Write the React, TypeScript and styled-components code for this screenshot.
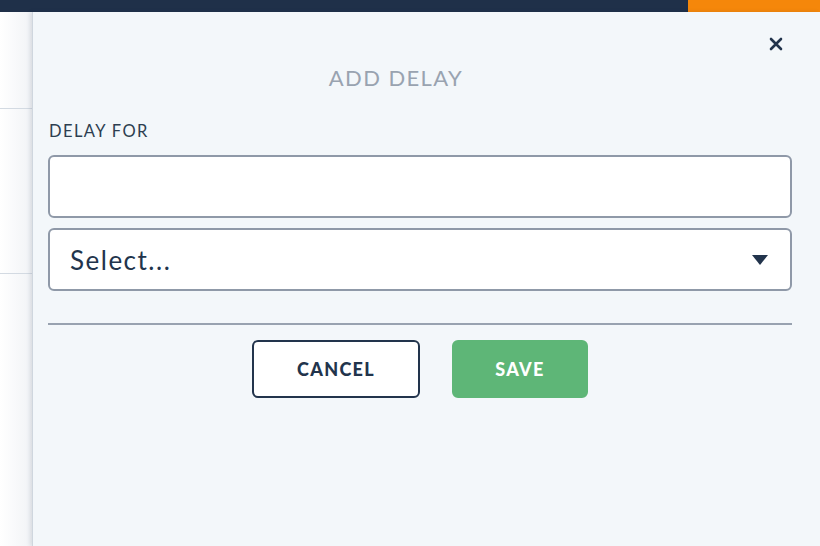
import React from "react";
import styled, { createGlobalStyle } from "styled-components";

const Global = createGlobalStyle`
  html, body { margin: 0; padding: 0; }
  body { width: 820px; height: 546px; overflow: hidden; background: #ffffff; font-family: Lato, "Open Sans", sans-serif; }
`;

const Page = styled.div`
  width: 820px;
  height: 546px;
  display: flex;
  flex-direction: column;
`;

const TopBar = styled.div`
  height: 12px;
  display: flex;
  background: #1f3049;
  flex-shrink: 0;
`;

const TopFill = styled.div`
  flex: 1;
`;

const TopAccent = styled.div`
  width: 132px;
  background: #f5870a;
`;

const Body = styled.div`
  flex: 1;
  display: flex;
`;

const Behind = styled.div`
  width: 32px;
  background: linear-gradient(to right, #ffffff, #f1f3f6);
  display: flex;
  flex-direction: column;
`;

const BehindRow = styled.div<{ $h: number }>`
  height: ${(p) => p.$h}px;
  border-bottom: 1px solid #d3dae2;
  flex-shrink: 0;
`;

const Panel = styled.div`
  flex: 1;
  background: #f3f7fa;
  border-left: 1px solid #cfd6de;
  box-shadow: -2px 0 4px rgba(30, 48, 73, 0.12);
  padding: 0 28px 0 15px;
  display: flex;
  flex-direction: column;
`;

const Header = styled.div`
  height: 96px;
  display: flex;
  align-items: center;
  justify-content: center;
  position: relative;
`;

const Title = styled.h2`
  margin: 0;
  padding-top: 34px;
  font-family: Lato, sans-serif;
  font-weight: 400;
  font-size: 22px;
  letter-spacing: 1.4px;
  color: #99a3b0;
  transform: translateX(-24px);
`;

const Close = styled.button`
  position: absolute;
  right: 5px;
  top: 21px;
  width: 22px;
  height: 22px;
  padding: 0;
  border: none;
  background: none;
  display: flex;
  align-items: center;
  justify-content: center;
`;

const Label = styled.div`
  font-family: Lato, sans-serif;
  font-size: 16.5px;
  letter-spacing: 1.4px;
  color: #2d3e50;
  margin-top: 13px;
  margin-bottom: 14px;
  padding-left: 1px;
`;

const Field = styled.div`
  height: 63px;
  box-sizing: border-box;
  border: 2px solid #8f99a8;
  border-radius: 6px;
  background: #ffffff;
  display: flex;
  align-items: center;
  padding: 0 20px;
  margin-bottom: 10px;
`;

const SelectText = styled.span`
  flex: 1;
  font-family: Lato, sans-serif;
  font-size: 26px;
  color: #22344c;
  letter-spacing: 1.5px;
`;

const Divider = styled.hr`
  margin: 22px 0 0;
  border: none;
  height: 2px;
  background: #98a2b0;
`;

const Actions = styled.div`
  display: flex;
  justify-content: center;
  gap: 32px;
  margin-top: 15px;
`;

const Button = styled.button<{ $primary?: boolean; $w: number }>`
  width: ${(p) => p.$w}px;
  height: 58px;
  box-sizing: border-box;
  border-radius: 6px;
  border: 2px solid ${(p) => (p.$primary ? "#5eb677" : "#22344c")};
  background: ${(p) => (p.$primary ? "#5eb677" : "#ffffff")};
  color: ${(p) => (p.$primary ? "#ffffff" : "#22344c")};
  font-family: Lato, sans-serif;
  font-weight: 900;
  font-size: 18px;
  letter-spacing: 1.3px;
`;

export default function App() {
  return (
    <Page>
      <Global />
      <TopBar>
        <TopFill />
        <TopAccent />
      </TopBar>
      <Body>
        <Behind>
          <BehindRow $h={96} />
          <BehindRow $h={164} />
        </Behind>
        <Panel>
          <Header>
            <Title>ADD DELAY</Title>
            <Close aria-label="close">
              <svg width="14" height="14" viewBox="0 0 14 14">
                <path d="M2 2 L12 12 M12 2 L2 12" stroke="#22344c" strokeWidth="2.6" strokeLinecap="round" />
              </svg>
            </Close>
          </Header>
          <Label>DELAY FOR</Label>
          <Field />
          <Field>
            <SelectText>Select...</SelectText>
            <svg width="16" height="10" viewBox="0 0 16 10" style={{ marginRight: 2 }}>
              <path d="M0 0 L16 0 L8 10 Z" fill="#22344c" />
            </svg>
          </Field>
          <Divider />
          <Actions>
            <Button $w={168}>CANCEL</Button>
            <Button $w={136} $primary>SAVE</Button>
          </Actions>
        </Panel>
      </Body>
    </Page>
  );
}
